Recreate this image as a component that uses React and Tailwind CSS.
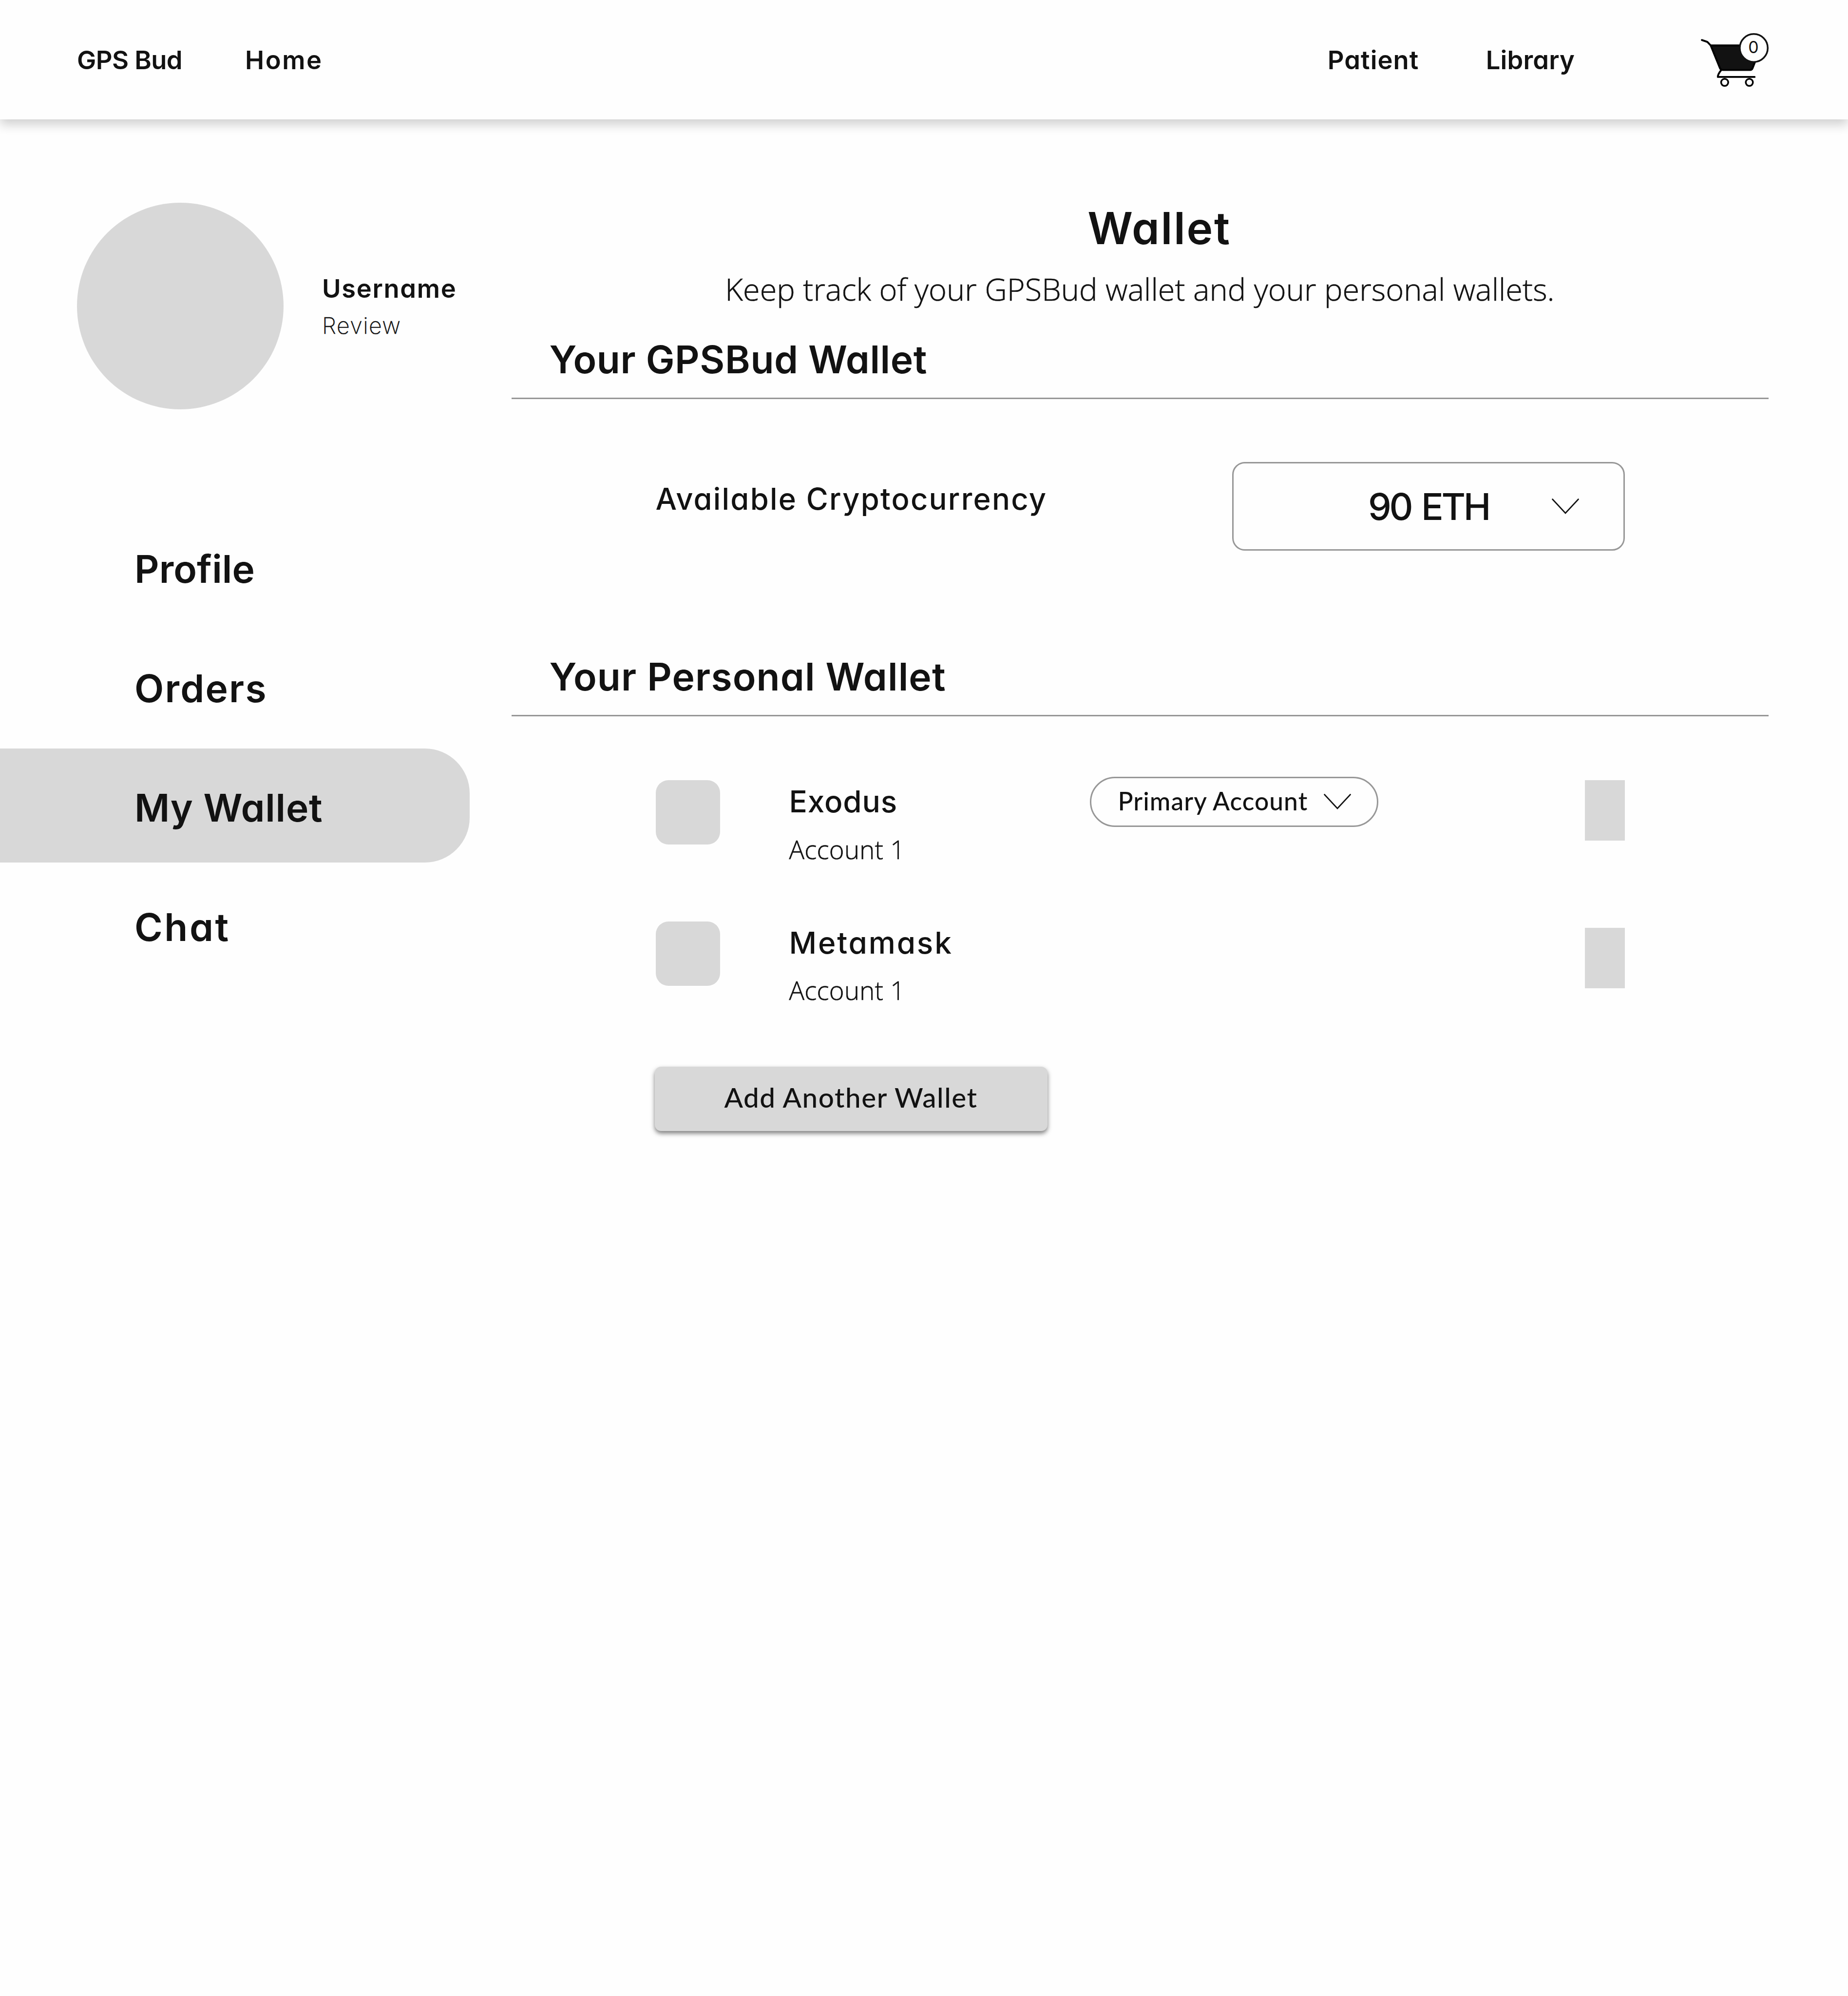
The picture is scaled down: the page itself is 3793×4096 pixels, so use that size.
const display = "font-['Inter','Liberation_Sans',sans-serif] [font-feature-settings:'cv11'] whitespace-nowrap";
const lato = "font-['Lato','Liberation_Sans',sans-serif] whitespace-nowrap";
const light = "font-['Open_Sans','Liberation_Sans',sans-serif] font-light [-webkit-text-stroke:0.6px_#121212] whitespace-nowrap";

function Chevron() {
  return (
    <svg className="h-8 w-14 shrink-0" viewBox="0 0 56 32" fill="none" stroke="#121212" strokeWidth="2.6" strokeLinecap="round">
      <path d="M1.5 1.5 28 30 54.5 1.5" />
    </svg>
  );
}

function Cart() {
  return (
    <svg className="h-[123px] w-[149.3px] shrink-0" viewBox="150 90 510 420" fill="none" stroke="#000" strokeWidth="13" strokeLinecap="round" strokeLinejoin="round">
      <path fill="#121212" d="M236 200H592L530 359Q525 372 513 372H322Q306 372 301 360Z" />
      <path d="M174 162 209 174Q214 176 218 181L236 200" />
      <path d="M308 375Q286 402 286 421H544" />
      <circle cx="334" cy="459" r="25" strokeWidth="12" />
      <circle cx="507" cy="459" r="25" strokeWidth="12" />
      <circle cx="538" cy="218" r="98" fill="#fefefe" stroke="#121212" strokeWidth="12" />
      <text x="536" y="253" textAnchor="middle" fill="#121212" stroke="none" fontSize="116" className="font-['Inter',sans-serif] font-normal">
        0
      </text>
    </svg>
  );
}

function Header() {
  return (
    <header className={`relative flex h-[245px] items-center bg-[#fefefe] px-[158px] text-[52.5px] font-semibold shadow-[0_10.5px_21px_rgba(0,0,0,0.19)] ${display}`}>
      <a className="w-[345px] pt-0.5 tracking-[-0.58px]">GPS Bud</a>
      <a className="pt-0.5 tracking-[2.51px]">Home</a>
      <nav className="ml-auto flex pt-0.5">
        <a className="w-[325px] tracking-[1.07px]">Patient</a>
        <a className="w-[436px] tracking-[0.17px]">Library</a>
      </nav>
      <Cart />
    </header>
  );
}

const links = [
  { label: "Profile", tracking: "tracking-[0.08px]" },
  { label: "Orders", tracking: "tracking-[2.23px]" },
  { label: "My Wallet", tracking: "tracking-[0.81px]", active: true },
  { label: "Chat", tracking: "tracking-[3.52px]" },
];

function Sidebar() {
  return (
    <aside className={`w-[1049.5px] shrink-0 pt-[171px] ${display}`}>
      <div className="flex items-center gap-[79px] pl-[158px]">
        <div className="size-[424px] shrink-0 rounded-full bg-[#d8d8d8]" />
        <div className="pt-[5px]">
          <p className="text-[52.5px] leading-[75.7px] font-semibold tracking-[1.67px]">Username</p>
          <p className="text-[46.5px] leading-[75.7px] font-extralight tracking-[1.4px] [-webkit-text-stroke:0.4px_#121212]">Review</p>
        </div>
      </div>
      <nav className="mt-[205.5px] flex flex-col gap-[11px]">
        {links.map((link) => (
          <a
            key={link.label}
            className={`flex h-[234px] w-[964px] items-center rounded-r-[92px] pt-2.5 pl-[276px] text-[78.5px] font-semibold ${link.tracking} ${link.active ? "bg-[#d8d8d8]" : ""}`}
          >
            {link.label}
          </a>
        ))}
      </nav>
    </aside>
  );
}

function SectionTitle({ children, className }) {
  return (
    <h2 className={`border-b-3 border-[#979797] pb-7 pl-[78px] text-[78.5px] leading-[100px] font-semibold ${display} ${className}`}>
      {children}
    </h2>
  );
}

function WalletRow({ name, tracking, primary, barOffset }) {
  return (
    <li className="flex h-[289.7px] items-start">
      <div className="size-[132px] shrink-0 rounded-[26px] bg-[#d8d8d8]" />
      <div className="ml-[142px] w-[617px] pt-2">
        <h3 className={`text-[62px] leading-[72px] font-medium ${display} ${tracking}`}>{name}</h3>
        <p className={`mt-[31.5px] text-[52.5px] leading-[60px] tracking-[0.3px] ${light}`}>Account 1</p>
      </div>
      {primary && (
        <button className="-mt-[7.5px] flex h-[103px] w-[592px] items-center gap-[33px] rounded-full border-3 border-[#979797] pl-[55px]">
          <span className={`pb-1 text-[51.5px] font-medium tracking-[1.06px] ${lato}`}>Primary Account</span>
          <Chevron />
        </button>
      )}
      <div className={`ml-auto h-[124px] w-[82px] bg-[#d8d8d8] ${barOffset}`} />
    </li>
  );
}

function WalletPanel() {
  return (
    <main className="w-[2580px] pt-[162.7px]">
      <h1 className={`pl-[80px] text-center text-[91px] leading-[120px] font-semibold tracking-[2.68px] ${display}`}>Wallet</h1>
      <p className={`mt-[23.6px] text-center text-[63px] leading-[84px] tracking-[0.07px] ${light}`}>
        Keep track of your GPSBud wallet and your personal wallets.
      </p>

      <SectionTitle className="mt-[53px] tracking-[0.62px]">Your GPSBud Wallet</SectionTitle>
      <div className="flex items-center justify-between pt-[129px] pr-[294.5px] pl-[296px]">
        <p className={`mb-[31px] text-[61.5px] font-medium tracking-[2.25px] ${display}`}>Available Cryptocurrency</p>
        <button className="grid h-[182px] w-[806px] grid-cols-[1fr_auto_1fr] items-center rounded-[26px] border-3 border-[#979797]">
          <span className={`col-start-2 text-[76px] font-medium tracking-[-4.4px] [word-spacing:5px] ${display}`}>90 ETH</span>
          <span className="flex justify-end pr-[91px]">
            <Chevron />
          </span>
        </button>
      </div>

      <SectionTitle className="mt-[208.5px] tracking-[1.15px]">Your Personal Wallet</SectionTitle>
      <ul className="pt-[131.5px] pr-[294.5px] pl-[296px]">
        <WalletRow name="Exodus" tracking="tracking-[0.93px]" primary />
        <WalletRow name="Metamask" tracking="tracking-[2.86px]" barOffset="mt-[13px]" />
      </ul>
      <button
        className={`mt-2 ml-[294px] flex h-[132px] w-[806px] items-center justify-center rounded-[13px] bg-[#d8d8d8] pb-1.5 text-[56.5px] font-medium tracking-[1.6px] shadow-[0_5px_10px_rgba(0,0,0,0.5)] ${lato}`}
      >
        Add Another Wallet
      </button>
    </main>
  );
}

export default function App() {
  return (
    <div className="h-[4096px] w-[3793px] overflow-hidden bg-[#fefefe] text-[#121212]">
      <Header />
      <div className="flex">
        <Sidebar />
        <WalletPanel />
      </div>
    </div>
  );
}
